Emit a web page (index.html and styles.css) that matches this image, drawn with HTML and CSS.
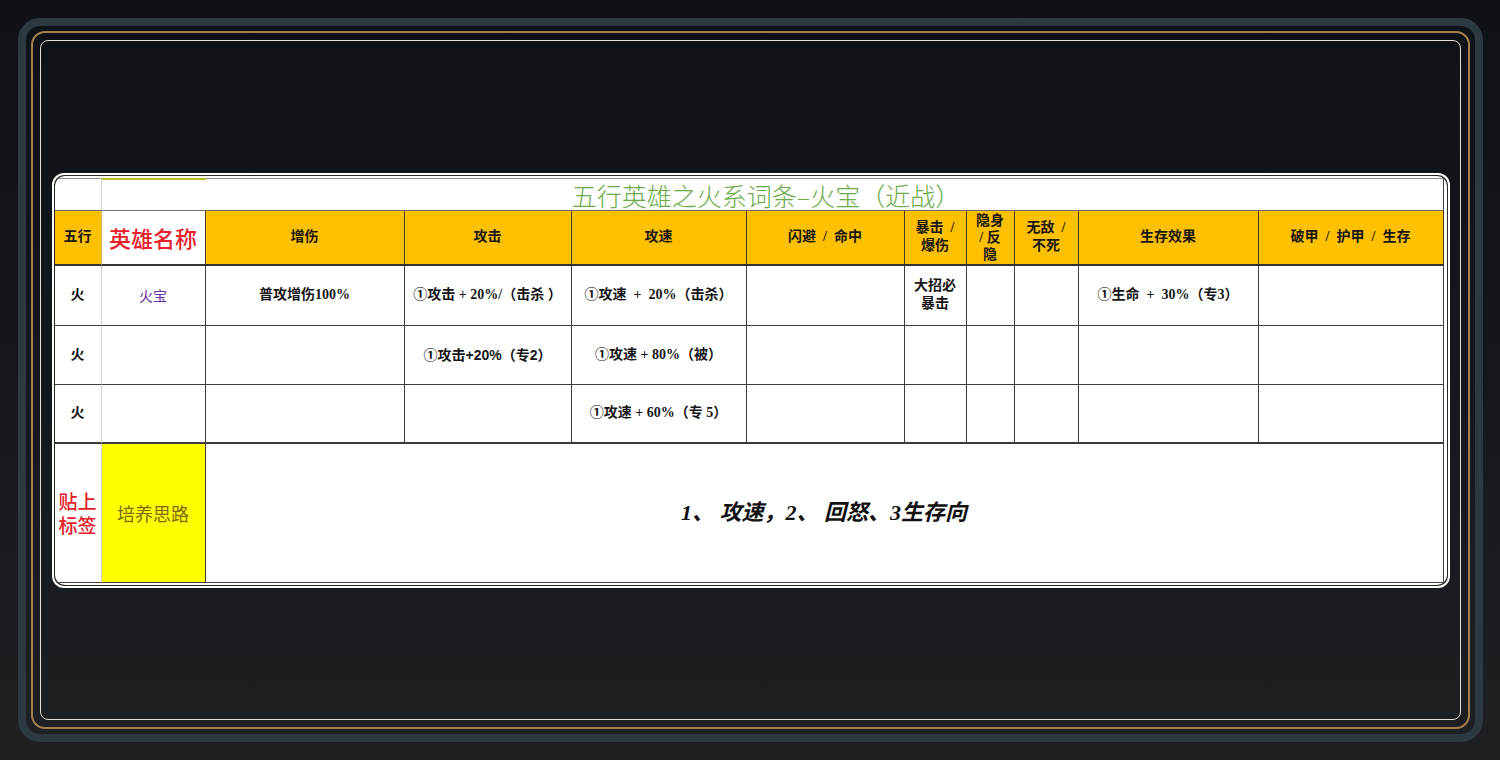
FILE: index.html
```html
<!DOCTYPE html>
<html lang="zh-CN">
<head>
<meta charset="utf-8">
<title>五行英雄之火系词条</title>
<link rel="stylesheet" href="styles.css">
</head>
<body>
<div class="frame">
  <div class="gold">
    <div class="inner">
      <div class="card">
        <div class="sheet">
          <div class="grid">
            <div class="c c1 t"></div>
            <div class="c t title">五行英雄之火系词条–火宝（近战）</div>

            <div class="c h c1h">五行</div>
            <div class="c h hn">英雄名称</div>
            <div class="c h">增伤</div>
            <div class="c h">攻击</div>
            <div class="c h">攻速</div>
            <div class="c h pre">闪避  /  命中</div>
            <div class="c h pre">暴击  /<br>爆伤</div>
            <div class="c h tight">隐身<br>/ 反<br>隐</div>
            <div class="c h pre">无敌  /<br>不死</div>
            <div class="c h">生存效果</div>
            <div class="c h pre">破甲  /  护甲  /  生存</div>

            <div class="c c1">火</div>
            <div class="c hero">火宝</div>
            <div class="c">普攻增伤100%</div>
            <div class="c pre">①攻击 + 20%/（击杀 ）</div>
            <div class="c pre">①攻速  +  20%（击杀）</div>
            <div class="c"></div>
            <div class="c">大招必<br>暴击</div>
            <div class="c"></div>
            <div class="c"></div>
            <div class="c pre">①生命  +  30%（专3）</div>
            <div class="c"></div>

            <div class="c c1">火</div>
            <div class="c"></div>
            <div class="c"></div>
            <div class="c sans">①攻击+20%（专2）</div>
            <div class="c">①攻速 + 80%（被）</div>
            <div class="c"></div>
            <div class="c"></div>
            <div class="c"></div>
            <div class="c"></div>
            <div class="c"></div>
            <div class="c"></div>

            <div class="c c1 r3">火</div>
            <div class="c r3"></div>
            <div class="c r3"></div>
            <div class="c r3"></div>
            <div class="c r3">①攻速 + 60%（专 5）</div>
            <div class="c r3"></div>
            <div class="c r3"></div>
            <div class="c r3"></div>
            <div class="c r3"></div>
            <div class="c r3"></div>
            <div class="c r3"></div>

            <div class="c c1 tag">贴上<br>标签</div>
            <div class="c plan">培养思路</div>
            <div class="c idea">1、 攻速，2、 回怒、3生存向</div>
          </div>
        </div>
      </div>
    </div>
  </div>
</div>
</body>
</html>
```

FILE: styles.css
```css
html, body {
  margin: 0;
  padding: 0;
}

body {
  width: 1500px;
  height: 760px;
  overflow: hidden;
  background: linear-gradient(180deg, #0e1217 0%, #14181d 50%, #1e2023 100%);
  font-family: "Liberation Serif", "Noto Sans CJK SC", serif;
}

.frame {
  box-sizing: border-box;
  margin: 18px 17px 18px 18px;
  height: 724px;
  border: 8px solid #2d3940;
  border-radius: 22px;
  padding: 5px;
}

.gold {
  box-sizing: border-box;
  height: 100%;
  border: 2px solid #a5804f;
  border-radius: 14px;
  padding: 7px;
}

.inner {
  box-sizing: border-box;
  height: 100%;
  border: 1px solid #e4e0d4;
  border-radius: 8px;
  display: flex;
  align-items: center;
  justify-content: center;
}

.card {
  border: 2px solid #ffffff;
  border-radius: 12px;
  padding: 1px;
  background: #262626;
}

.sheet {
  background: #ffffff;
  border-radius: 10px;
  overflow: hidden;
  padding: 2px 3px 2px 0;
}

.grid {
  display: grid;
  grid-template-columns: 47px 104px 199px 167px 175px 158px 62px 48px 64px 180px 185px;
  grid-template-rows: 33px 55px 60px 59px 59px 139px;
  color: #161616;
}

.c {
  box-sizing: border-box;
  border-right: 1px solid #3e3e3e;
  border-bottom: 1px solid #3e3e3e;
  display: flex;
  align-items: center;
  justify-content: center;
  text-align: center;
  font-size: 14px;
  font-weight: 700;
  line-height: 18px;
}

.pre {
  white-space: pre;
}

.c1 {
  border-right-color: #cfcfcf;
}

.t {
  border-bottom-color: #6e6e6e;
  background: linear-gradient(#8c8c8c, #8c8c8c) no-repeat 0 0 / 100% 1px;
}

.title {
  grid-column: 2 / span 10;
  font-family: "Noto Sans CJK SC", sans-serif;
  font-size: 25px;
  font-weight: 300;
  color: #6aab48;
  padding-right: 12px;
  padding-top: 2px;
  background:
    linear-gradient(#b9bf1c, #b9bf1c) no-repeat 0 0 / 104px 2px,
    linear-gradient(#8c8c8c, #8c8c8c) no-repeat 0 0 / 100% 1px;
}

.h {
  background: #ffc000;
  border-bottom: 2px solid #333333;
  border-right-color: #43391f;
}

.c1h {
  border-right-color: #c9b27a;
}

.hn {
  background: #ffffff;
  color: #e5202c;
  font-size: 22px;
  font-weight: 500;
  font-family: "Noto Sans CJK SC", sans-serif;
}

.tight {
  line-height: 17px;
}

.hero {
  color: #6b2f9e;
  font-weight: 400;
  font-family: "Noto Sans CJK SC", sans-serif;
}

.sans {
  font-family: "Liberation Sans", "Noto Sans CJK SC", sans-serif;
}

.r3 {
  border-bottom: 2px solid #3a3a3a;
}

.tag {
  color: #e3202a;
  font-size: 19px;
  line-height: 24px;
  font-weight: 500;
  font-family: "Noto Sans CJK SC", sans-serif;
}

.plan {
  background: #ffff00;
  color: #7c6b14;
  font-size: 18px;
  font-weight: 400;
  font-family: "Noto Sans CJK SC", sans-serif;
  border-right-color: #3e3e3e;
}

.idea {
  grid-column: 3 / span 9;
  font-size: 22px;
  font-style: italic;
  font-weight: 700;
  color: #111111;
}
```
